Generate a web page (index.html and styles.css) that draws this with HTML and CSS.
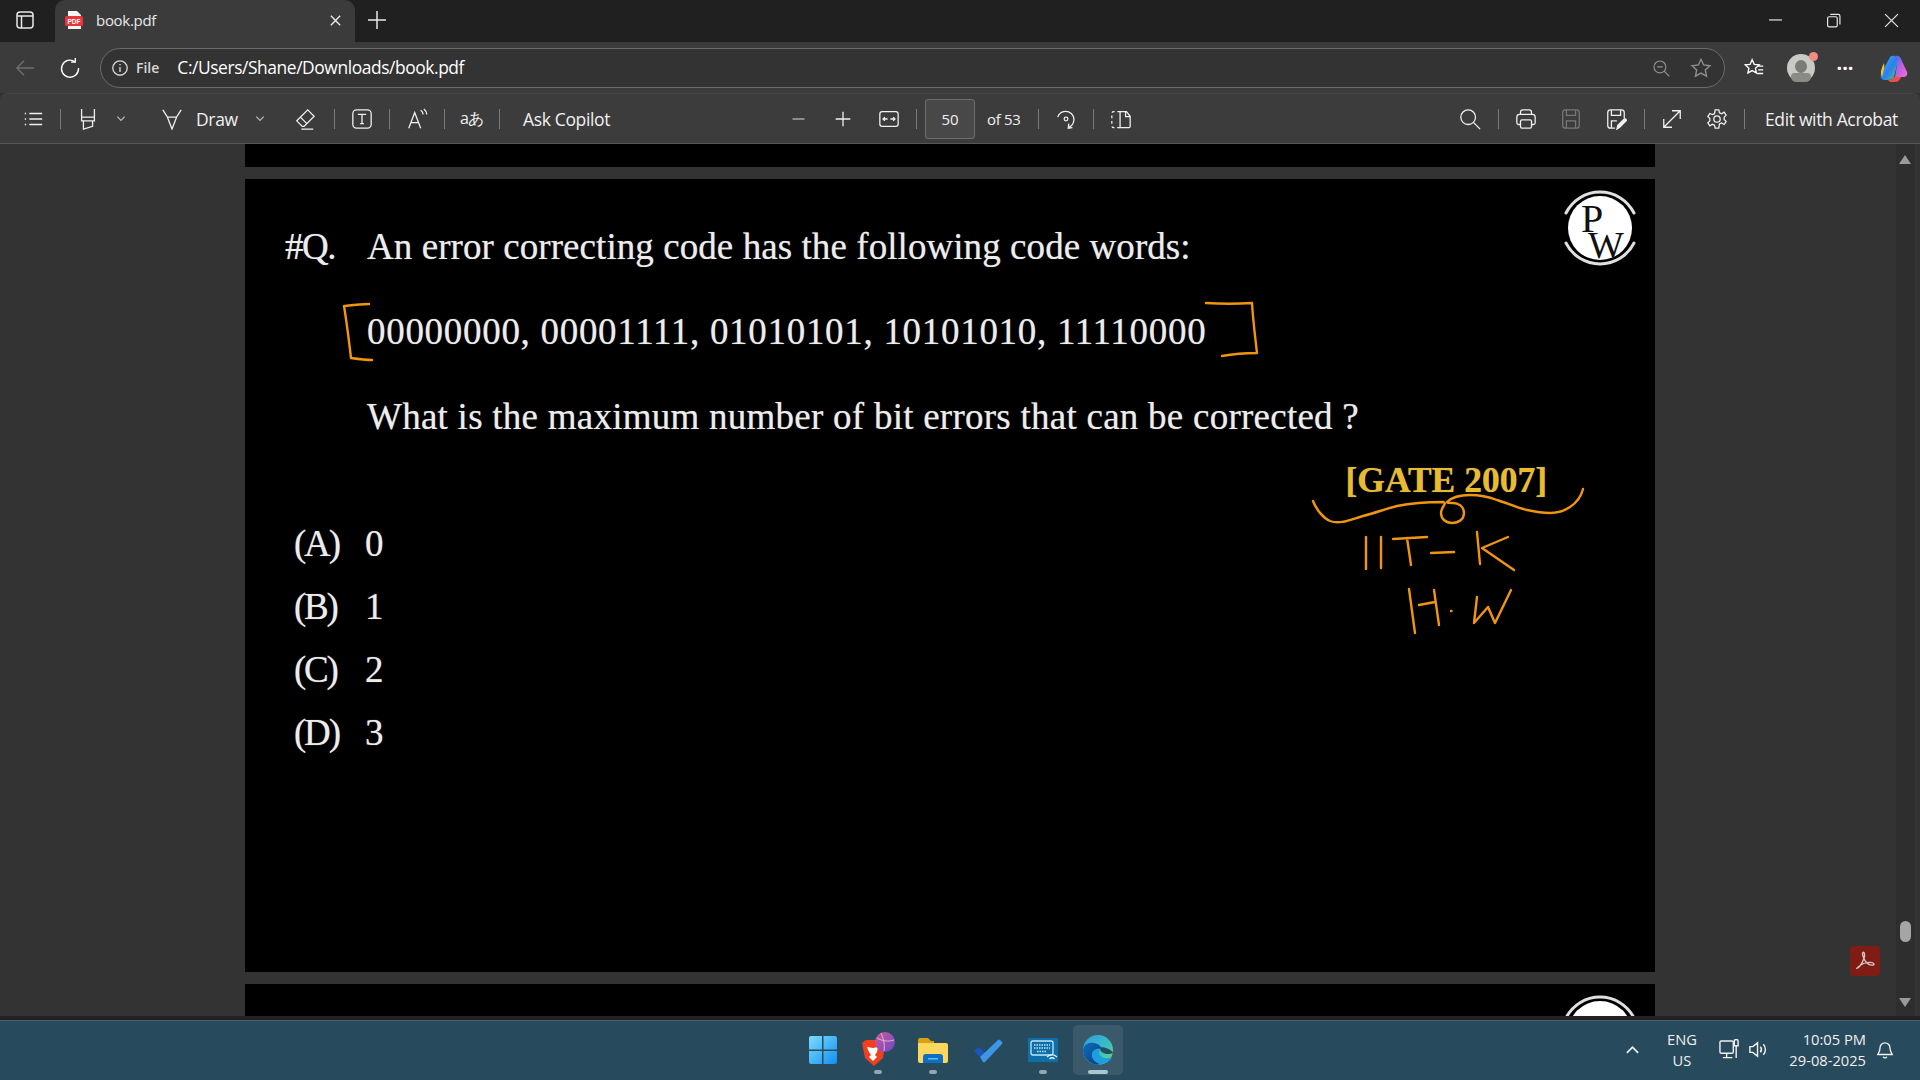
FILE: index.html
```html
<!DOCTYPE html>
<html lang="en">
<head>
    <meta charset="UTF-8">
    <meta name="viewport" content="width=device-width, initial-scale=1.0">
    <title>book.pdf</title>
    <link rel="stylesheet" href="styles.css">
</head>
<body>
    <div class="tabstrip">
        <svg class="ic sidebar-ic" viewBox="0 0 20 20"><rect x="2" y="2" width="16" height="16" rx="3"/><path d="M2 6h16M6.500 6v12"/></svg>
        <div class="tab">
            <svg class="pdf-ic" viewBox="0 0 20 20">
                <path class="pdf-sheet" d="M4 1h9l4 4v14H4z"/>
                <rect class="pdf-band" x="1" y="6" width="18" height="10" rx="1.500"/>
                <text class="pdf-label" x="10" y="13.600">PDF</text>
            </svg>
            <span class="tab-title">book.pdf</span>
            <svg class="ic tab-close" viewBox="0 0 14 14"><path d="M2 2l10 10M12 2L2 12"/></svg>
        </div>
        <svg class="ic new-tab" viewBox="0 0 20 20"><path d="M10 1v18M1 10h18"/></svg>
        <div class="win-btns">
            <svg class="ic" viewBox="0 0 14 14"><path d="M1 6.500h12"/></svg>
            <svg class="ic" viewBox="0 0 14 14"><rect x="1.500" y="3.500" width="9" height="9.500" rx="1.500"/><path d="M4 1.200h7.500a1.500 1.500 0 0 1 1.500 1.500v8"/></svg>
            <svg class="ic" viewBox="0 0 14 14"><path d="M1 1l12 12M13 1L1 13"/></svg>
        </div>
    </div>

    <div class="addressbar">
        <svg class="ic dim back-ic" viewBox="0 0 24 24"><path d="M22 12H3M11 4l-8 8 8 8"/></svg>
        <svg class="ic reload-ic" viewBox="0 0 24 24"><path d="M17.500 5.200A9.300 9.300 0 1 0 21.300 12M17.800 1v4.600h-4.600"/></svg>
        <div class="omnibox">
            <svg class="ic info-ic" viewBox="0 0 20 20"><circle cx="10" cy="10" r="8"/><path d="M10 9v5.500M10 5.600v1.400"/></svg>
            <span class="file-chip">File</span>
            <span class="url">C:/Users/Shane/Downloads/book.pdf</span>
            <svg class="ic dim zoom-out" viewBox="0 0 24 24"><circle cx="10" cy="10" r="7.500"/><path d="M15.500 15.500L22 22M6.500 10h7"/></svg>
            <svg class="ic dim star" viewBox="0 0 24 24"><path d="M12 2.500l2.900 6.200 6.800.8-5 4.600 1.300 6.700-6-3.300-6 3.300 1.300-6.700-5-4.600 6.800-.8z"/></svg>
        </div>
        <svg class="ic fav-ic" viewBox="0 0 24 24"><path d="M10 3l2.300 5 5.200.6-3.900 3.600 1 5.200-4.600-2.600-4.600 2.600 1-5.200L2.500 8.600 7.700 8zM16 10h6M16.500 14h5.500M15.500 18h6.500"/></svg>
        <div class="avatar"><span class="avatar-head"></span><span class="avatar-body"></span><span class="avatar-dot"></span></div>
        <span class="more">···</span>
        <svg class="copilot" viewBox="0 0 28 28">
            <defs>
                <linearGradient id="cpA" x1="0" y1="0" x2="1" y2="1"><stop offset="0" stop-color="#25c6ea"/><stop offset=".55" stop-color="#2f7df0"/><stop offset="1" stop-color="#3fd07a"/></linearGradient>
                <linearGradient id="cpB" x1="0" y1="0" x2="1" y2="1"><stop offset="0" stop-color="#3d6ff0"/><stop offset=".55" stop-color="#c75fe2"/><stop offset="1" stop-color="#ef74c8"/></linearGradient>
            </defs>
            <path fill="url(#cpB)" d="M15 2c3-1 5 0 6 3l6 13c1 3-1 5-4 5h-8l2-12c.5-4-.5-7-2-9z"/>
            <path fill="url(#cpA)" d="M9 5c1-3 3-4 6-3 2 2 2.500 5 2 9l-3 12c-1 2-3 3-6 3H5c-3 0-5-2-4-6z"/>
            <path fill="#f4c430" d="M1 20C.5 17 2 13 4 9c.5 2 .5 4 0 6l-2 8z"/>
            <path fill="#ef4f45" d="M8 26c3 0 5-1 6-3h7c-1 3-3 5-6 5H10z"/>
        </svg>
    </div>

    <div class="pdfbar">
        <svg class="ic tool" viewBox="0 0 24 24"><path d="M3 6h1.500M8 6h14M3 12h1.500M8 12h14M3 18h1.500M8 18h14"/></svg>
        <span class="sep"></span>
        <svg class="ic tool" viewBox="0 0 24 24"><path d="M5 1v9h14V1M5 10v4h14v-4M7 14v9l10-3v-6"/></svg>
        <svg class="ic tool chev" viewBox="0 0 12 12"><path d="M2 4l4 4 4-4"/></svg>
        <svg class="ic tool draw-ic" viewBox="0 0 24 24"><path d="M2 2l5 8h10l5-8M7 10l5 13 5-13"/></svg>
        <span class="tool-text draw-text">Draw</span>
        <svg class="ic tool chev draw-chev" viewBox="0 0 12 12"><path d="M2 4l4 4 4-4"/></svg>
        <svg class="ic tool eraser" viewBox="0 0 24 24"><path d="M15 2l7 7-11 11H9l-6-6zM7 10l7 7M8 23h13"/></svg>
        <span class="sep"></span>
        <svg class="ic tool" viewBox="0 0 24 24"><rect x="2" y="2" width="20" height="20" rx="4"/><path d="M7.500 7h9M12 7v10M10 17h4"/></svg>
        <span class="sep"></span>
        <svg class="ic tool" viewBox="0 0 24 24"><path d="M3 22L9.500 5 16 22M5.500 16h8M16 2.500c1.500 1 2.500 2.500 2.700 4.500M19.500 1c2 1.500 3 3.500 3.200 6"/></svg>
        <span class="sep"></span>
        <span class="tool-text translate">aあ</span>
        <span class="sep"></span>
        <span class="tool-text copilot-text">Ask Copilot</span>

        <svg class="ic tool zoom-minus" viewBox="0 0 24 24"><path d="M5 12h13"/></svg>
        <svg class="ic tool zoom-plus" viewBox="0 0 24 24"><path d="M4 12h16M12 4v16"/></svg>
        <svg class="ic tool fit" viewBox="0 0 24 24"><rect x="2" y="4" width="20" height="16" rx="2.500"/><path d="M5.500 12h5M7.500 10l-2 2 2 2M13.500 12h5M16.500 10l2 2-2 2"/></svg>
        <span class="sep"></span>
        <span class="page-input">50</span>
        <span class="tool-text page-count">of 53</span>
        <span class="sep"></span>
        <svg class="ic tool" viewBox="0 0 24 24"><path d="M3 10a9 9 0 1 1 12 11M15 17l-.500 5 4.500-.500"/><circle cx="12" cy="12" r="2"/></svg>
        <span class="sep"></span>
        <svg class="ic tool" viewBox="0 0 24 24"><path d="M11 4h7l4 5v11a1.500 1.500 0 0 1-1.500 1.500H11zM17 4v5.500h5"/><path stroke-dasharray="3 3" d="M11 4H4a2 2 0 0 0-2 2v13.500a2 2 0 0 0 2 2h7"/></svg>

        <svg class="ic tool search-ic" viewBox="0 0 24 24"><circle cx="10" cy="10" r="8"/><path d="M16 16l7 7"/></svg>
        <span class="sep"></span>
        <svg class="ic tool" viewBox="0 0 24 24"><path d="M6 7V4.500A2.500 2.500 0 0 1 8.500 2h7A2.500 2.500 0 0 1 18 4.500V7M6 18H4a2 2 0 0 1-2-2V10a3 3 0 0 1 3-3h14a3 3 0 0 1 3 3v6a2 2 0 0 1-2 2h-2"/><rect x="6" y="13" width="12" height="9" rx="1.500"/></svg>
        <svg class="ic tool save-off" viewBox="0 0 24 24"><rect x="3" y="2" width="18" height="20" rx="3"/><path d="M7 2v6h10V2M7 22v-8h10v8"/></svg>
        <svg class="ic tool save-as" viewBox="0 0 24 24"><path d="M11 22H6a3 3 0 0 1-3-3V5a3 3 0 0 1 3-3h12a3 3 0 0 1 3 3v6M7 2v6h10V2M7 22v-8h6"/><path class="fill" d="M13 23l1-4 7-7c1-1 3 1 2 2l-7 7z"/></svg>
        <span class="sep"></span>
        <svg class="ic tool" viewBox="0 0 24 24"><path d="M3 21L21 3M12 3h9v9M3 12v9h9"/></svg>
        <svg class="ic tool gear" viewBox="0 0 24 24"><circle cx="12" cy="12" r="3.500"/><path d="M10 2h4l.7 3.200 2.300 1 2.800-1.700 2.200 3.300-2.200 2.200v2.500l2.200 2.200-2.200 3.300-2.800-1.700-2.300 1L14 22h-4l-.7-3.200-2.300-1-2.800 1.700L2 16.200 4.200 14v-2.500L2 9.300l2.200-3.300L7 7.200l2.300-1z"/></svg>
        <span class="sep"></span>
        <span class="tool-text acrobat-text">Edit with Acrobat</span>
    </div>

    <div class="viewer">
        <div class="pages">
            <div class="page page-prev"></div>
            <div class="page page-main">
                <div class="q-row"><span class="q-tag">#Q.</span><span class="q-first">An error correcting code has the following code words:</span></div>
                <div class="q-line q-codes">00000000, 00001111, 01010101, 10101010, 11110000</div>
                <div class="q-line q-ask">What is the maximum number of bit errors that can be corrected ?</div>
                <div class="gate">[GATE 2007]</div>
                <ul class="options">
                    <li><span class="opt-key">(A)</span>0</li>
                    <li><span class="opt-key">(B)</span>1</li>
                    <li><span class="opt-key">(C)</span>2</li>
                    <li><span class="opt-key">(D)</span>3</li>
                </ul>

                <!-- pen strokes and logo sit on top of the page, in screen coordinates -->
                <svg class="ink" viewBox="245 179 1410 793">
                    <path d="M369 304c-8 0-16 1-25 2 3 18 5 35 7 52 7 1 14 2 21 2"/>
                    <path d="M1206 303c15 1 31 1 46 0 1 17 3 33 5 50-12 0-24 1-35 3"/>
                    <path d="M1313 501C1316 509 1323 518 1330 521C1340 525 1352 519 1363 516C1375 513 1385 509 1397 506C1412 503 1427 502 1443 502C1448 503 1441 507 1441 513C1441 519 1446 523 1452 523C1459 523 1464 519 1464 513C1464 506 1458 503 1453 503C1449 503 1447 503 1447 502C1451 498 1460 495 1470 495C1480 495 1489 497 1497 500C1507 503 1517 508 1527 510C1536 512 1543 513 1550 513C1557 513 1564 511 1570 507C1576 503 1581 497 1583 489"/>
                    <path d="M1366 537v32M1381 537v31M1393 539l34-2M1407 538l4 27M1431 553l23-1M1477 532l3 32M1508 537l-26 11 32 22"/>
                    <path d="M1409 589l6 44M1419 605l16-3M1434 590l5 35M1451 611h.5M1477 597l-3 26 14-16 7 16 16-33"/>
                    <g class="logo">
                        <circle class="logo-disc" cx="1600" cy="228" r="32"/>
                        <path class="logo-arc" d="M1566 213a38 38 0 0 1 68 0M1566 243a38 38 0 0 0 68 0"/>
                        <text class="logo-p" x="1581" y="232">P</text>
                        <text class="logo-w" x="1588" y="258">W</text>
                    </g>
                </svg>
            </div>
            <div class="page page-next">
                <svg class="next-logo" viewBox="0 0 80 33"><circle cx="40" cy="49" r="32" fill="#fff"/><path d="M6 34a38 38 0 0 1 68 0" fill="none" stroke="#e0e0e0" stroke-width="3"/></svg>
            </div>
        </div>
        <div class="side-badge">
            <svg viewBox="0 0 24 24"><path d="M3 20c3-1 6-6 8-11 1-3 .5-7-1-6.500-1.500.5-.5 5 2 9 2 3 5 5 8 5s2-3-2-3c-5 0-10 2-12 4-2 1.500-3 3-3 2.500z"/></svg>
        </div>
        <div class="scrollbar">
            <span class="arrow-up"></span>
            <span class="thumb"></span>
            <span class="arrow-down"></span>
        </div>
    </div>

    <div class="taskgap"></div>
    <div class="taskbar">
        <div></div>
        <div class="task-icons">
            <div class="task-item">
                <svg viewBox="0 0 30 30">
                    <defs><linearGradient id="winG" x1="0" y1="0" x2="1" y2="1"><stop offset="0" stop-color="#7fdcff"/><stop offset="1" stop-color="#0f8fef"/></linearGradient></defs>
                    <path fill="url(#winG)" d="M1 3a2 2 0 0 1 2-2h11v13.500H1zM15.500 1H27a2 2 0 0 1 2 2v11.500H15.500zM1 16h13v13H3a2 2 0 0 1-2-2zM15.500 16H29v11a2 2 0 0 1-2 2H15.500z"/>
                </svg>
            </div>
            <div class="task-item is-open brave">
                <svg viewBox="0 0 36 36">
                    <defs><linearGradient id="orbG" x1="0" y1="0" x2="1" y2="1"><stop offset="0" stop-color="#d05a9a"/><stop offset="1" stop-color="#6a49c8"/></linearGradient></defs>
                    <path fill="#f0401f" d="M1 11l4-3h15l4 3-2 15-9 8-9-8z"/>
                    <path fill="#fff" d="M6 15l6 1 5-1-1 5-2 3 2 2-4 4-4-4 2-2-2-3z"/>
                    <circle cx="24" cy="10" r="10" fill="url(#orbG)"/>
                    <path d="M16 6c5 3 11 4 17 2M20 1c2 5 4 10 3 18" fill="none" stroke="#e8b0d0" stroke-width="1"/>
                </svg>
            </div>
            <div class="task-item is-open">
                <svg viewBox="0 0 30 30">
                    <path fill="#d9a016" d="M0 5a2 2 0 0 1 2-2h8l3 3h3v5H0z"/>
                    <path fill="#fbd75b" d="M0 8h28a2 2 0 0 1 2 2v16a2 2 0 0 1-2 2H2a2 2 0 0 1-2-2z"/>
                    <path fill="#0d6fc4" d="M5 28v-6a3 3 0 0 1 3-3h14a3 3 0 0 1 3 3v6z"/>
                    <path fill="#5cc0f5" d="M10 23h10v1.500H10z"/>
                </svg>
            </div>
            <div class="task-item">
                <svg viewBox="0 0 30 30">
                    <path fill="#1b55c0" d="M1 16l5-4 6 6-5 4z"/>
                    <path fill="#3d95e8" d="M7 22L25 5a1.500 1.500 0 0 1 2 0l2 2a1.500 1.500 0 0 1 0 2L12 27a1.500 1.500 0 0 1-2 0z"/>
                </svg>
            </div>
            <div class="task-item is-open">
                <svg viewBox="0 0 30 24">
                    <path fill="#0e6ea8" d="M0 0h30v24H0z"/>
                    <rect x="3" y="3" width="22" height="14" rx="2" fill="none" stroke="#bfe6f7" stroke-width="1.300"/>
                    <path d="M6 7h16M6 10h16M9 13.500h10" stroke="#bfe6f7" stroke-width="1.500" stroke-dasharray="1.500 1"/>
                    <path d="M19 19c3-3 7-3 10 0M21.500 21c1.500-1.500 3.500-1.500 5 0" fill="none" stroke="#e8f7ff" stroke-width="1.200"/>
                </svg>
            </div>
            <div class="task-item is-active">
                <svg viewBox="0 0 30 30">
                    <defs>
                        <linearGradient id="edgeA" x1="0" y1="0" x2="1" y2="1"><stop offset="0" stop-color="#2b9fe0"/><stop offset=".6" stop-color="#3bc0c0"/><stop offset="1" stop-color="#7be05a"/></linearGradient>
                        <linearGradient id="edgeB" x1="0" y1="0" x2="1" y2="1"><stop offset="0" stop-color="#0d6cc0"/><stop offset="1" stop-color="#0a3f7f"/></linearGradient>
                    </defs>
                    <circle cx="15" cy="15" r="15" fill="url(#edgeA)"/>
                    <path fill="#264d5f" d="M30 18c-4 2-12 1-13-4-.500-2 4-2 6-1 1 .500 6 2 7 5z"/>
                    <path fill="url(#edgeB)" d="M0 15C1 9 6 7 11 8c5 1 8 4 7 6-4-1-9 1-9 6 0 4 4 8 9 9-3 1-7 1-10-1-5-3-8-8-8-13z"/>
                    <path fill="#1b9fe0" d="M18 29c5 0 9-3 11-7-3 1-7 2-10 0-4-2-4-6-1-8-5 0-9 2-9 6 0 4 4 8 9 9z"/>
                </svg>
            </div>
        </div>
        <div class="tray">
            <svg class="ic tray-chev" viewBox="0 0 16 10"><path d="M2 8l6-6 6 6"/></svg>
            <div class="tray-lang"><span>ENG</span><span>US</span></div>
            <svg class="ic tray-net" viewBox="0 0 22 22"><rect x="1" y="2" width="14" height="13" rx="1.500"/><path d="M8 15v4M4 19.500h10M16 2.500a2 2 0 0 1 4 0v4.500h-4zM18 7v13"/></svg>
            <svg class="ic tray-vol" viewBox="0 0 22 22"><path d="M2 8h3l5-4v14l-5-4H2zM13 8c1.500 2 1.500 4 0 6M16 5.500c3 3 3 8 0 11"/></svg>
            <div class="tray-clock"><span>10:05 PM</span><span>29-08-2025</span></div>
            <svg class="ic tray-bell" viewBox="0 0 20 20"><path d="M10 2a5.500 5.500 0 0 0-5.500 5.500c0 4-2 6-2.500 7.500h16c-.5-1.500-2.500-3.500-2.500-7.500A5.500 5.500 0 0 0 10 2zM8 17.500a2.200 2.200 0 0 0 4 0"/></svg>
        </div>
    </div>
</body>
</html>
```

FILE: styles.css
```css
* {
    box-sizing: border-box;
}
html, body {
    margin: 0;
    height: 100%;
    overflow: hidden;
}
body {
    width: 1920px;
    height: 1080px;
    display: flex;
    flex-direction: column;
    background: #333;
    color: #fff;
    font-family: "Open Sans", "Noto Sans", sans-serif;
    font-size: 17px;
}
.ic {
    fill: none;
    stroke: currentColor;
    stroke-width: 1.5;
    flex: none;
}
.dim {
    color: #8f8f8f;
}

/* title strip */
.tabstrip {
    height: 42px;
    flex: none;
    display: flex;
    align-items: center;
    background: #202020;
    color: #e8e8e8;
}
.sidebar-ic {
    width: 20px;
    height: 20px;
    margin: 0 21px 2px 15px;
}
.tab {
    width: 300px;
    height: 42px;
    margin-left: -1px;
    padding: 0 13px 2px 9px;
    display: flex;
    align-items: center;
    background: #3b3b3b;
    border-radius: 10px 10px 0 0;
}
.pdf-ic {
    width: 20px;
    height: 20px;
}
.pdf-sheet {
    fill: #f4f4f4;
}
.pdf-band {
    fill: #e8343a;
}
.pdf-label {
    fill: #fff;
    font-family: "Liberation Sans", sans-serif;
    font-size: 6.5px;
    font-weight: 700;
    text-anchor: middle;
}
.tab-title {
    margin-left: 12px;
    flex: 1;
    font-size: 15px;
    letter-spacing: -0.3px;
}
.tab-close {
    width: 13px;
    height: 13px;
}
.new-tab {
    width: 20px;
    height: 20px;
    margin: 0 0 2px 12px;
}
.win-btns {
    margin: 0 0 2px auto;
    padding-right: 21px;
    display: flex;
    gap: 43px;
}
.win-btns .ic {
    width: 15px;
    height: 15px;
    stroke-width: 1.1;
}

/* address row */
.addressbar {
    height: 51px;
    flex: none;
    display: flex;
    align-items: center;
    background: #3b3b3b;
    padding-top: 1px;
}
.back-ic {
    width: 22px;
    height: 22px;
    margin-left: 14px;
    color: #6f6f6f;
}
.reload-ic {
    width: 22px;
    height: 22px;
    margin-left: 23px;
}
.omnibox {
    width: 1625px;
    height: 40px;
    margin-left: 19px;
    padding: 0 12px 0 10px;
    display: flex;
    align-items: center;
    background: #333;
    border: 1px solid #6b6b6b;
    border-radius: 20px;
}
.info-ic {
    width: 18px;
    height: 18px;
    color: #d8d8d8;
}
.file-chip {
    margin-left: 7px;
    padding-bottom: 2px;
    font-size: 14px;
    font-weight: 600;
    color: #d8d8d8;
}
.url {
    margin-left: 18px;
    padding-bottom: 2px;
    flex: 1;
    font-size: 17.4px;
    letter-spacing: -0.42px;
}
.zoom-out {
    width: 19px;
    height: 19px;
}
.star {
    width: 22px;
    height: 22px;
    margin-left: 19px;
}
.fav-ic {
    width: 22px;
    height: 22px;
    margin-left: 18px;
}
.avatar {
    position: relative;
    width: 28px;
    height: 28px;
    margin-left: 22px;
    border-radius: 50%;
    background: #c9c9c6;
}
.avatar-head {
    position: absolute;
    left: 8px;
    top: 6px;
    width: 12px;
    height: 13px;
    border-radius: 50%;
    background: #7b7b78;
}
.avatar-body {
    position: absolute;
    left: 4px;
    bottom: 0;
    width: 20px;
    height: 9px;
    border-radius: 10px 10px 14px 14px;
    background: #8a8a87;
}
.avatar-dot {
    position: absolute;
    right: -3px;
    top: -2px;
    width: 9px;
    height: 9px;
    border-radius: 50%;
    background: #f28b82;
}
.more {
    margin-left: 20px;
    width: 20px;
    font-size: 20px;
    font-weight: 700;
    line-height: 1;
    text-align: center;
}
.copilot {
    width: 28px;
    height: 28px;
    margin-left: 25px;
}

/* pdf toolbar */
.pdfbar {
    height: 51px;
    flex: none;
    display: flex;
    align-items: center;
    padding-left: 15px;
    background: #3c3c3c;
    border-top: 1px solid #444;
    border-bottom: 1px solid #575757;
    border-radius: 8px 8px 0 0;
    color: #f0f0f0;
}
.tool {
    width: 36px;
    height: 22px;
    stroke-width: 1.4;
}
.sep {
    width: 1px;
    height: 20px;
    margin: 0 9px;
    background: #7a7a7a;
    flex: none;
}
.chev {
    width: 30px;
    height: 11px;
    color: #bbb;
}
.draw-ic {
    margin-left: 18px;
}
.tool-text {
    font-size: 17.5px;
    letter-spacing: -0.35px;
    white-space: nowrap;
}
.draw-text {
    width: 40px;
    margin-left: 6px;
}
.draw-chev {
    margin-left: 9px;
}
.eraser {
    margin: 0 2px 0 12px;
}
.translate {
    width: 36px;
    font-size: 16px;
    text-align: center;
}
.copilot-text {
    width: 90px;
    margin-left: 14px;
}
.zoom-minus {
    margin-left: 168px;
    color: #bbb;
}
.zoom-plus {
    margin-left: 8px;
}
.fit {
    margin-left: 10px;
}
.page-input {
    width: 50px;
    height: 40px;
    margin-left: -1px;
    display: flex;
    align-items: center;
    justify-content: center;
    background: #484848;
    border: 1px solid #6f6f6f;
    border-radius: 3px;
    font-size: 15px;
    flex: none;
}
.page-count {
    width: 34px;
    margin: 0 8px 0 12px;
    font-size: 15px;
}
.search-ic {
    margin: 0 1px 0 313px;
}
.save-off {
    margin-left: 9px;
    color: #777;
}
.save-as {
    margin: 0 1px 0 9px;
}
.gear {
    margin-left: 9px;
}
.acrobat-text {
    margin-left: 11px;
}
.fill {
    fill: currentColor;
}

/* viewer */
.viewer {
    position: relative;
    height: 872px;
    flex: none;
    background: #333;
    overflow: hidden;
}
.pages {
    width: 1410px;
    margin-left: 245px;
    display: flex;
    flex-direction: column;
    gap: 12px;
}
.page {
    background: #000;
    flex: none;
}
.page-prev {
    height: 23px;
}
.page-main {
    position: relative;
    height: 793px;
    padding: 45px 0 0 40px;
    display: flex;
    flex-direction: column;
    gap: 39px;
    color: #ececec;
    font-family: "Liberation Serif", serif;
    font-size: 37px;
    line-height: 46px;
    text-shadow: 0 0 1px rgba(255, 255, 255, 0.55);
}
.q-row {
    display: flex;
}
.q-tag {
    width: 82px;
    letter-spacing: -1.5px;
}
.q-first {
    letter-spacing: 0.07px;
}
.q-line {
    margin-left: 82px;
}
.q-codes {
    letter-spacing: 0.7px;
}
.q-ask {
    letter-spacing: 0.25px;
}
.gate {
    align-self: flex-end;
    padding-right: 108px;
    margin-top: -22px;
    color: #e8bc2c;
    font-size: 35.5px;
    font-weight: 700;
}
.options {
    list-style: none;
    margin: -21px 0 0 9px;
    padding: 0;
    display: flex;
    flex-direction: column;
    gap: 17px;
}
.opt-key {
    display: inline-block;
    width: 71px;
    letter-spacing: -2.2px;
}
.ink {
    position: absolute;
    inset: 0;
    width: 100%;
    height: 100%;
    fill: none;
    stroke: #f0950f;
    stroke-width: 2.4;
    stroke-linecap: round;
    stroke-linejoin: round;
}
.logo-disc {
    fill: #fff;
    stroke: none;
}
.logo-arc {
    stroke: #e0e0e0;
    stroke-width: 3;
}
.logo text {
    fill: #111;
    stroke: none;
    font-family: "Liberation Serif", serif;
    text-shadow: none;
}
.logo-p {
    font-size: 40px;
}
.logo-w {
    font-size: 38px;
}
.page-next {
    height: 33px;
    overflow: hidden;
    display: flex;
    justify-content: flex-end;
    padding-right: 15px;
}
.next-logo {
    width: 80px;
    height: 33px;
}
.side-badge {
    position: absolute;
    left: 1850px;
    top: 802px;
    width: 30px;
    height: 30px;
    padding: 4px;
    background: #7f1d15;
    border-radius: 4px;
}
.side-badge svg {
    display: block;
    fill: none;
    stroke: #d8c8c6;
    stroke-width: 1.5;
}
.scrollbar {
    position: absolute;
    left: 1896px;
    top: 0;
    bottom: 0;
    width: 19px;
    background: #2e2e2e;
}
.arrow-up, .arrow-down {
    position: absolute;
    left: 3px;
    border-left: 6.5px solid transparent;
    border-right: 6.5px solid transparent;
}
.arrow-up {
    top: 11px;
    border-bottom: 9px solid #9a9a9a;
}
.arrow-down {
    bottom: 9px;
    border-top: 9px solid #9a9a9a;
}
.thumb {
    position: absolute;
    left: 4px;
    top: 777px;
    width: 11px;
    height: 21px;
    border-radius: 6px;
    background: #a5a5a5;
}

/* taskbar */
.taskgap {
    height: 4px;
    flex: none;
    background: #222;
}
.taskbar {
    height: 60px;
    flex: none;
    display: grid;
    grid-template-columns: 1fr auto 1fr;
    align-items: center;
    padding-bottom: 2px;
    background: #274a5c;
    border-top: 1px solid #48616e;
}
.task-icons {
    display: flex;
    gap: 5px;
}
.task-item {
    position: relative;
    width: 50px;
    height: 50px;
    display: flex;
    align-items: center;
    justify-content: center;
    border-radius: 5px;
}
.task-item svg {
    width: 30px;
    height: 30px;
    overflow: visible;
}
.task-item.brave svg {
    width: 36px;
    height: 36px;
    margin-left: 3px;
}
.is-open::after, .is-active::after {
    content: "";
    position: absolute;
    bottom: 1px;
    left: 21px;
    width: 8px;
    height: 4px;
    border-radius: 2px;
    background: #93a5ae;
}
.is-active {
    background: #3a5a6b;
}
.is-active::after {
    left: 15px;
    width: 20px;
    background: #a6c8d2;
}
.tray {
    justify-self: end;
    display: flex;
    align-items: center;
    padding-right: 26px;
    font-size: 14.7px;
    line-height: 21px;
    color: #f0f0f0;
}
.tray-chev {
    width: 15px;
    height: 10px;
    stroke-width: 1.8;
}
.tray-lang {
    width: 40px;
    margin-left: 22px;
    display: flex;
    flex-direction: column;
    align-items: center;
}
.tray-net {
    width: 21px;
    height: 21px;
    margin-left: 17px;
}
.tray-vol {
    width: 21px;
    height: 21px;
    margin-left: 8px;
}
.tray-clock {
    width: 97px;
    display: flex;
    flex-direction: column;
    align-items: flex-end;
}
.tray-bell {
    width: 18px;
    height: 18px;
    margin-left: 10px;
}
```
